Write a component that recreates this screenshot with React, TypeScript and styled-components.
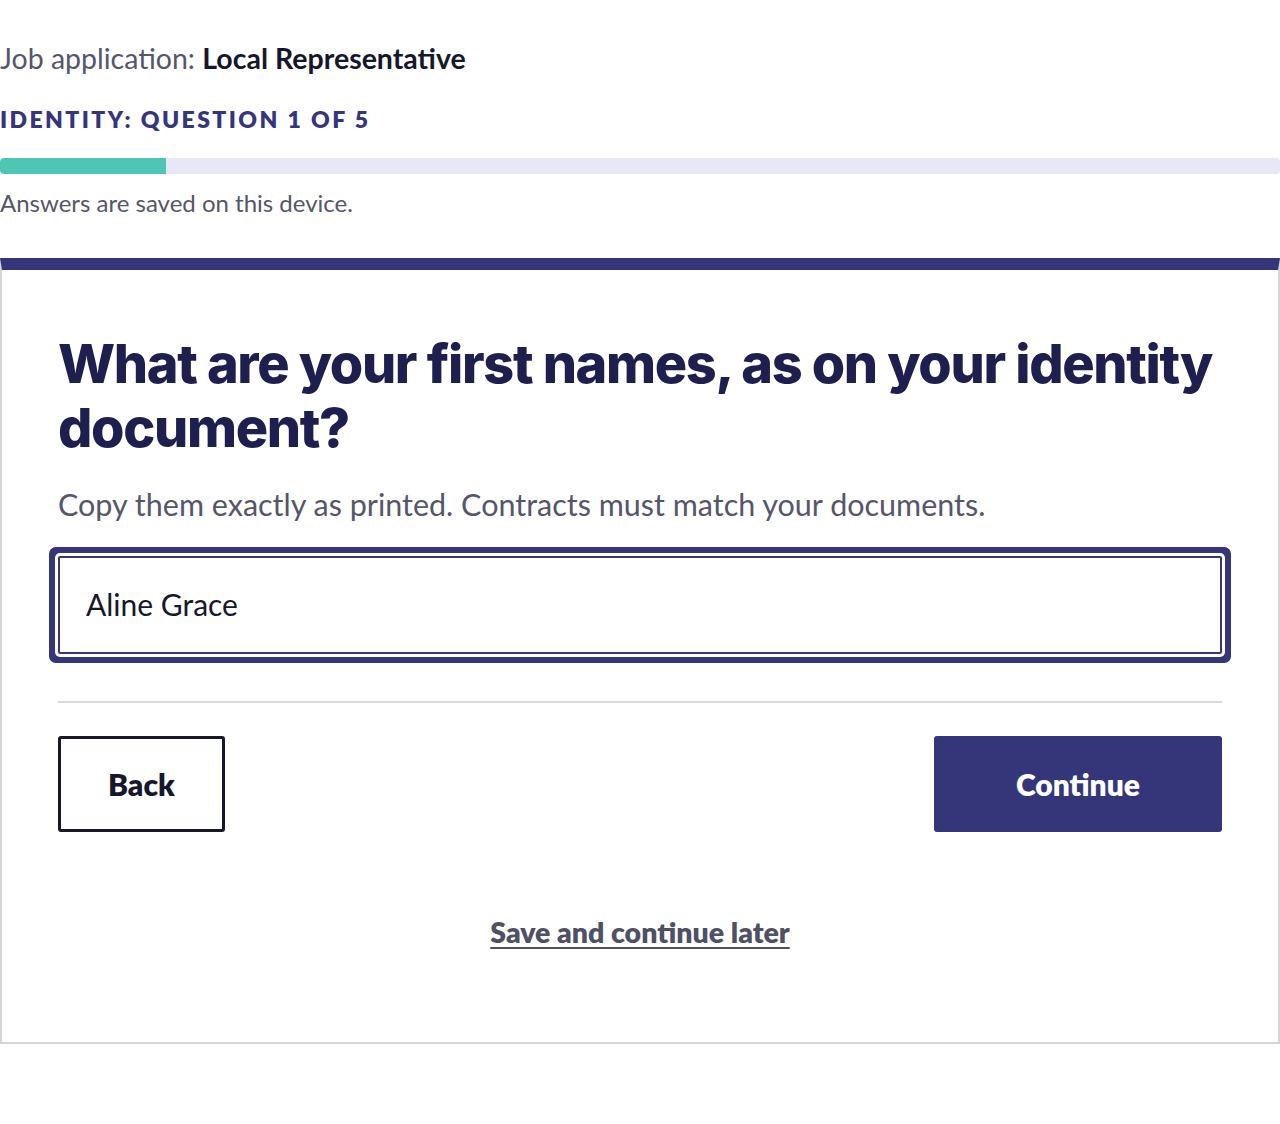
import React from "react";
import styled, { createGlobalStyle } from "styled-components";

const Global = createGlobalStyle`
  html, body { margin: 0; padding: 0; background: #ffffff; }
  body { font-family: "Lato", "Liberation Sans", sans-serif; color: #1b1b2f; }
  * { box-sizing: border-box; }
`;

const Page = styled.div`
  width: 1280px;
  padding-top: 40px;
`;

const Header = styled.header`
  display: flex;
  flex-direction: column;
`;

const JobLine = styled.p`
  margin: 0;
  font-size: 28.5px;
  line-height: 36px;
  color: #55566a;
  strong { color: #17172b; font-weight: 700; }
`;

const Step = styled.p`
  margin: 28px 0 0;
  font-size: 23px;
  line-height: 30px;
  font-weight: 800;
  letter-spacing: 0.105em;
  color: #35367a;
  text-transform: uppercase;
`;

const Track = styled.div`
  margin-top: 24px;
  height: 16px;
  border-radius: 4px;
  background: #e7e7f5;
  overflow: hidden;
`;

const Fill = styled.div`
  height: 100%;
  background: #4fc5b5;
  border-radius: 4px 0 0 4px;
`;

const Saved = styled.p`
  margin: 14px 0 0;
  font-size: 24px;
  line-height: 30px;
  color: #55566a;
`;

const Card = styled.section`
  margin-top: 40px;
  border: 2px solid #d6d6d6;
  border-top: 12px solid #35367a;
  padding: 62px 56px 92px;
  display: flex;
  flex-direction: column;
`;

const Question = styled.h1`
  margin: 0;
  font-family: "Inter", "Liberation Sans", sans-serif;
  font-weight: 800;
  font-size: 54px;
  line-height: 64px;
  letter-spacing: -0.025em;
  color: #1e1f4e;
`;

const Hint = styled.p`
  margin: 24px 0 0;
  font-size: 30.5px;
  line-height: 40px;
  color: #55566a;
`;

const Input = styled.input`
  margin-top: 32px;
  width: 100%;
  height: 98px;
  padding: 0 26px 3px;
  border: 2px solid #35367a;
  border-radius: 2px;
  box-shadow: 0 0 0 3px #ffffff, 0 0 0 9px #35367a;
  font-family: "Lato", "Liberation Sans", sans-serif;
  font-size: 30px;
  color: #17172b;
  outline: none;
  background: #ffffff;
`;

const Divider = styled.hr`
  margin: 47px 0 0;
  border: none;
  height: 2px;
  background: #dadada;
`;

const Actions = styled.div`
  margin-top: 33px;
  display: flex;
  justify-content: space-between;
`;

const Button = styled.button<{ $primary?: boolean }>`
  height: 96px;
  padding: 0 ${(p) => (p.$primary ? "82px" : "47px")};
  border-radius: 3px;
  font-family: "Lato", "Liberation Sans", sans-serif;
  font-size: 30px;
  font-weight: 800;
  cursor: pointer;
  border: ${(p) => (p.$primary ? "none" : "3px solid #17172b")};
  background: ${(p) => (p.$primary ? "#35367a" : "#ffffff")};
  color: ${(p) => (p.$primary ? "#ffffff" : "#17172b")};
`;

const Later = styled.a`
  margin-top: 82px;
  align-self: center;
  font-size: 28.5px;
  line-height: 36px;
  font-weight: 800;
  color: #4f5064;
  text-decoration: underline;
  text-underline-offset: 4px;
  text-decoration-thickness: 2px;
  cursor: pointer;
`;

export default function App() {
  const progress = 13;
  return (
    <Page>
      <Global />
      <Header>
        <JobLine>
          Job application: <strong>Local Representative</strong>
        </JobLine>
        <Step>Identity: Question 1 of 5</Step>
        <Track>
          <Fill style={{ width: `${progress}%` }} />
        </Track>
        <Saved>Answers are saved on this device.</Saved>
      </Header>
      <Card>
        <Question>What are your first names, as on your identity document?</Question>
        <Hint>Copy them exactly as printed. Contracts must match your documents.</Hint>
        <Input defaultValue="Aline Grace" aria-label="First names" />
        <Divider />
        <Actions>
          <Button>Back</Button>
          <Button $primary>Continue</Button>
        </Actions>
        <Later>Save and continue later</Later>
      </Card>
    </Page>
  );
}
